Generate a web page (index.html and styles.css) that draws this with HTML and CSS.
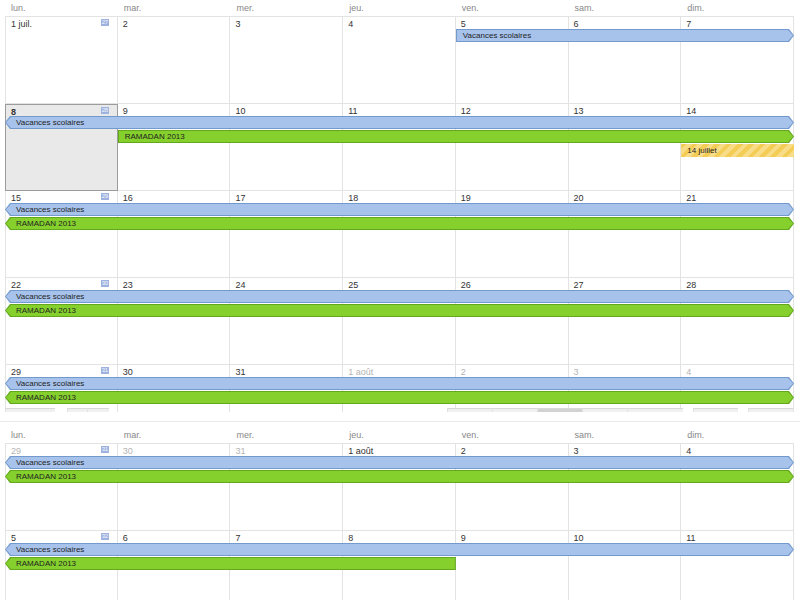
FILE: index.html
```html
<!DOCTYPE html>
<html lang="fr">
<head>
<meta charset="utf-8">
<title>Calendrier</title>
<link rel="stylesheet" href="styles.css">
</head>
<body>
<div class="view v1">
  <div class="dow"><span>lun.</span><span>mar.</span><span>mer.</span><span>jeu.</span><span>ven.</span><span>sam.</span><span>dim.</span></div>
  <div class="month">
    <div class="week">
      <div class="cell"><span>1 juil.</span><span class="wk">27</span></div>
      <div class="cell"><span>2</span></div>
      <div class="cell"><span>3</span></div>
      <div class="cell"><span>4</span></div>
      <div class="cell"><span>5</span></div>
      <div class="cell"><span>6</span></div>
      <div class="cell"><span>7</span></div>
      <div class="ev blue s5 e8 r1 ar"><span>Vacances scolaires</span></div>
    </div>
    <div class="week">
      <div class="cell today"><span class="b">8</span><span class="wk">28</span></div>
      <div class="cell"><span>9</span></div>
      <div class="cell"><span>10</span></div>
      <div class="cell"><span>11</span></div>
      <div class="cell"><span>12</span></div>
      <div class="cell"><span>13</span></div>
      <div class="cell"><span>14</span></div>
      <div class="ev blue s1 e8 r1 al ar"><span>Vacances scolaires</span></div>
      <div class="ev green s2 e8 r2 ar"><span>RAMADAN 2013</span></div>
      <div class="ev yellow s7 e8 r3"><span>14 juillet</span></div>
    </div>
    <div class="week">
      <div class="cell"><span>15</span><span class="wk">29</span></div>
      <div class="cell"><span>16</span></div>
      <div class="cell"><span>17</span></div>
      <div class="cell"><span>18</span></div>
      <div class="cell"><span>19</span></div>
      <div class="cell"><span>20</span></div>
      <div class="cell"><span>21</span></div>
      <div class="ev blue s1 e8 r1 al ar"><span>Vacances scolaires</span></div>
      <div class="ev green s1 e8 r2 al ar"><span>RAMADAN 2013</span></div>
    </div>
    <div class="week">
      <div class="cell"><span>22</span><span class="wk">30</span></div>
      <div class="cell"><span>23</span></div>
      <div class="cell"><span>24</span></div>
      <div class="cell"><span>25</span></div>
      <div class="cell"><span>26</span></div>
      <div class="cell"><span>27</span></div>
      <div class="cell"><span>28</span></div>
      <div class="ev blue s1 e8 r1 al ar"><span>Vacances scolaires</span></div>
      <div class="ev green s1 e8 r2 al ar"><span>RAMADAN 2013</span></div>
    </div>
    <div class="week">
      <div class="cell"><span>29</span><span class="wk">31</span></div>
      <div class="cell"><span>30</span></div>
      <div class="cell"><span>31</span></div>
      <div class="cell dim"><span>1 août</span></div>
      <div class="cell dim"><span>2</span></div>
      <div class="cell dim"><span>3</span></div>
      <div class="cell dim"><span>4</span></div>
      <div class="ev blue s1 e8 r1 al ar"><span>Vacances scolaires</span></div>
      <div class="ev green s1 e8 r2 al ar"><span>RAMADAN 2013</span></div>
      <div class="strip">
        <i class="sg w50"></i><i class="gap w12"></i><i class="sg w20"></i><i class="sg w22"></i>
        <i class="gap w338"></i>
        <i class="sg w45"></i><i class="sg w45"></i><i class="sg w45 dark"></i><i class="sg w45"></i><i class="sg w56"></i>
        <i class="gap w10"></i><i class="sg w45"></i><i class="gap w10"></i><i class="sg w45"></i>
      </div>
    </div>
  </div>
</div>
<div class="sep"></div>
<div class="view v2">
  <div class="dow"><span>lun.</span><span>mar.</span><span>mer.</span><span>jeu.</span><span>ven.</span><span>sam.</span><span>dim.</span></div>
  <div class="month">
    <div class="week">
      <div class="cell dim"><span>29</span><span class="wk">31</span></div>
      <div class="cell dim"><span>30</span></div>
      <div class="cell dim"><span>31</span></div>
      <div class="cell"><span>1 août</span></div>
      <div class="cell"><span>2</span></div>
      <div class="cell"><span>3</span></div>
      <div class="cell"><span>4</span></div>
      <div class="ev blue s1 e8 r1 al ar"><span>Vacances scolaires</span></div>
      <div class="ev green s1 e8 r2 al ar"><span>RAMADAN 2013</span></div>
    </div>
    <div class="week">
      <div class="cell"><span>5</span><span class="wk">32</span></div>
      <div class="cell"><span>6</span></div>
      <div class="cell"><span>7</span></div>
      <div class="cell"><span>8</span></div>
      <div class="cell"><span>9</span></div>
      <div class="cell"><span>10</span></div>
      <div class="cell"><span>11</span></div>
      <div class="ev blue s1 e8 r1 al ar"><span>Vacances scolaires</span></div>
      <div class="ev green s1 e5 r2 al"><span>RAMADAN 2013</span></div>
    </div>
  </div>
</div>
</body>
</html>
```
FILE: styles.css
```css
* { box-sizing: border-box; }
body {
  margin: 0;
  background: #fff;
  font-family: "Liberation Sans", Arial, sans-serif;
  color: #333;
}
.view { margin: 0 6px 0 5px; }
.v1 { height: 412px; overflow: hidden; }
.sep { height: 1px; background: #ebebeb; margin: 9px 0 5px; }

.dow {
  display: grid;
  grid-template-columns: repeat(7, 1fr);
  height: 16px;
  font-size: 9px;
  line-height: 11px;
  padding-top: 3px;
  color: #888;
}
.dow span { padding-left: 6px; }

.month { border-top: 1px solid #e3e3e3; }

.week {
  display: grid;
  grid-template-columns: repeat(7, 1fr);
  grid-template-rows: 12px repeat(5, 14px) 1fr;
  height: 87px;
}
.cell {
  grid-row: 1 / -1;
  display: flex;
  justify-content: space-between;
  align-items: flex-start;
  padding: 3px 8px 0 5px;
  font-size: 9px;
  line-height: 9px;
  color: #333;
  border-right: 1px solid #e3e3e3;
  border-bottom: 1px solid #e3e3e3;
}
.cell:nth-child(1) { grid-column: 1; border-left: 1px solid #e3e3e3; }
.cell:nth-child(2) { grid-column: 2; }
.cell:nth-child(3) { grid-column: 3; }
.cell:nth-child(4) { grid-column: 4; }
.cell:nth-child(5) { grid-column: 5; }
.cell:nth-child(6) { grid-column: 6; }
.cell:nth-child(7) { grid-column: 7; }
.cell.dim { color: #b3b3b3; }
.cell.today {
  background: #e9e9e9;
  border: 1px solid #9c9c9c;
}
.b { font-weight: bold; }
.wk {
  width: 8px;
  height: 7px;
  margin-top: -1px;
  background: #9db2de;
  color: #f4f7fd;
  font-size: 6px;
  line-height: 7px;
  letter-spacing: -0.5px;
  text-align: center;
  overflow: hidden;
}

/* events */
.ev {
  --l: 0px;
  --r: 0px;
  align-self: start;
  height: 13px;
  padding: 1px;
  clip-path: polygon(var(--l) 0, calc(100% - var(--r)) 0, 100% 50%, calc(100% - var(--r)) 100%, var(--l) 100%, 0 50%);
}
.ev span {
  display: block;
  height: 11px;
  padding-left: 6px;
  font-size: 8px;
  line-height: 11px;
  color: #1e1e1e;
  white-space: nowrap;
  overflow: hidden;
  clip-path: polygon(var(--l) 0, calc(100% - var(--r)) 0, 100% 50%, calc(100% - var(--r)) 100%, var(--l) 100%, 0 50%);
}
.ev.al { --l: 5px; }
.ev.ar { --r: 5px; }
.ev.al span { padding-left: 10px; }
.r1 { grid-row: 2; }
.r2 { grid-row: 3; }
.r3 { grid-row: 4; }
.s1 { grid-column-start: 1; }
.s2 { grid-column-start: 2; }
.s5 { grid-column-start: 5; }
.s7 { grid-column-start: 7; }
.e5 { grid-column-end: 5; }
.e8 { grid-column-end: 8; }

.blue { background: #729acd; }
.blue span { background: #a7c3eb; }
.green { background: #62a71c; }
.green span { background: #86d02e; }
.yellow { background: #f1cf5c; padding: 0; }
.yellow span {
  height: 13px;
  line-height: 13px;
  padding-left: 6px;
  background: repeating-linear-gradient(135deg, #f3cd55 0 4px, #f8dc88 4px 8px);
}

/* partial strip at bottom of clipped view */
.strip {
  grid-row: 4;
  grid-column: 1 / -1;
  display: flex;
  align-self: start;
  margin-top: 3px;
  height: 4px;
}
.strip i { display: block; height: 4px; flex: none; }
.sg { background: #f0f0f0; border-top: 1px solid #d9d9d9; border-left: 1px solid #e2e2e2; }
.sg.dark { background: #d2d2d2; }
.w10 { width: 10px; }
.w12 { width: 12px; }
.w20 { width: 20px; }
.w22 { width: 22px; }
.w45 { width: 45px; }
.w50 { width: 50px; }
.w56 { width: 56px; }
.w338 { width: 338px; }
```
